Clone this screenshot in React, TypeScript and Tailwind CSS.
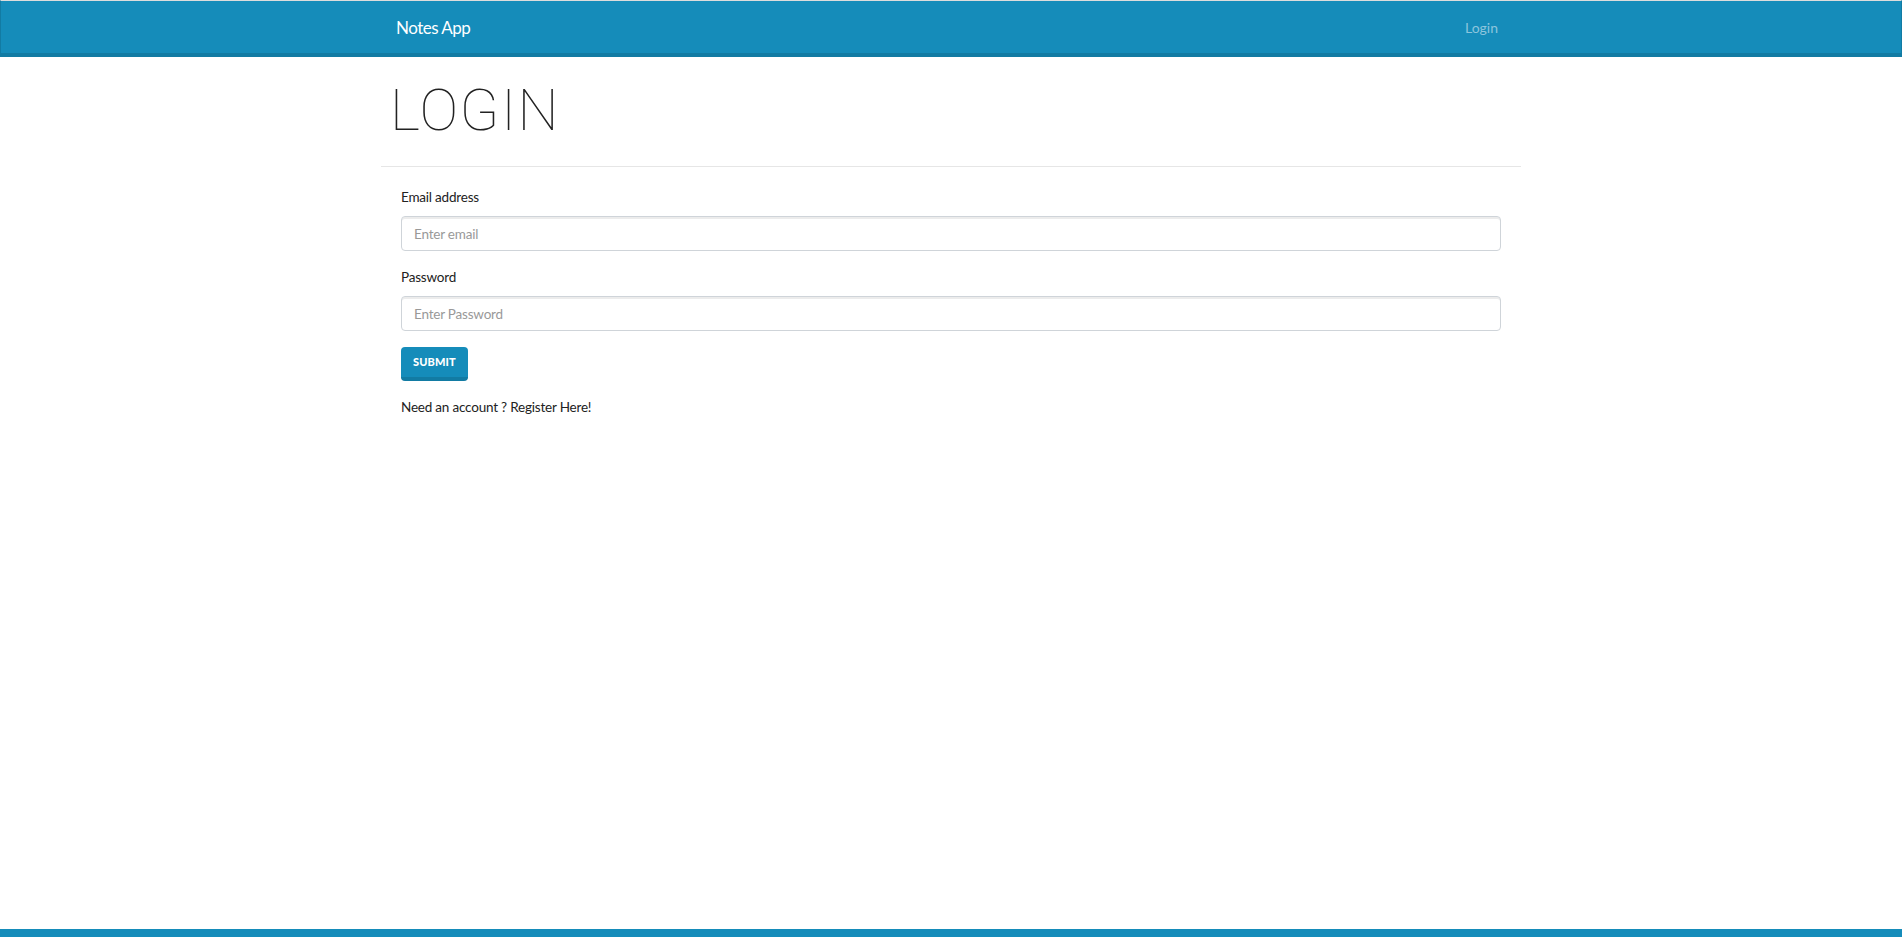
import React from "react";

export default function App() {
  return (
    <div className="min-h-screen flex flex-col bg-white text-[#222222] font-['Lato','Liberation_Sans',sans-serif] text-[13.5px] tracking-[-0.015em]">
      <nav className="border-t border-t-[#dcdcdc] border-x border-x-[#127ba3] border-b-4 border-b-[#127ba3] bg-[#158cba]">
        <div className="mx-auto w-[1140px] px-[15px] h-[52px] flex items-center justify-between">
          <span className="text-white text-[17px] tracking-[-0.03em] leading-none">Notes App</span>
          <span className="px-2 text-[14px] tracking-normal text-[#8cc5dd]">Login</span>
        </div>
      </nav>

      <main className="flex-1">
        <div className="mx-auto w-[1140px]">
          <div className="px-[9px] pt-[24px] pb-[27px]">
            <h1 className="font-['Roboto',sans-serif] font-thin text-[58px] leading-[58px] tracking-[0.025em] text-[#222]">LOGIN</h1>
          </div>
          <hr className="border-0 border-t border-t-[#e6e6e6]" />

          <form className="px-5 pt-5 flex flex-col" onSubmit={(e) => e.preventDefault()}>
            <label className="leading-5">Email address</label>
            <input
              type="email"
              placeholder="Enter email"
              className="mt-[9px] h-[35px] w-full rounded border border-[#cfd4d9] shadow-[inset_0_2px_0_rgba(0,0,0,0.075)] px-3 text-[13.5px] placeholder:text-[#999999] outline-none"
            />
            <label className="mt-4 leading-5">Password</label>
            <input
              type="password"
              placeholder="Enter Password"
              className="mt-[9px] h-[35px] w-full rounded border border-[#cfd4d9] shadow-[inset_0_2px_0_rgba(0,0,0,0.075)] px-3 text-[13.5px] placeholder:text-[#999999] outline-none"
            />
            <div className="mt-4">
              <button
                type="submit"
                className="h-[34px] px-[12px] rounded bg-[#158cba] border-b-4 border-b-[#127ba3] text-white text-[11px] font-black tracking-[0.01em] uppercase"
              >
                Submit
              </button>
            </div>
            <p className="mt-4 leading-5">
              Need an account ? <a className="text-[#222]">Register Here!</a>
            </p>
          </form>
        </div>
      </main>

      <footer className="h-2 bg-[#158cba]" />
    </div>
  );
}
